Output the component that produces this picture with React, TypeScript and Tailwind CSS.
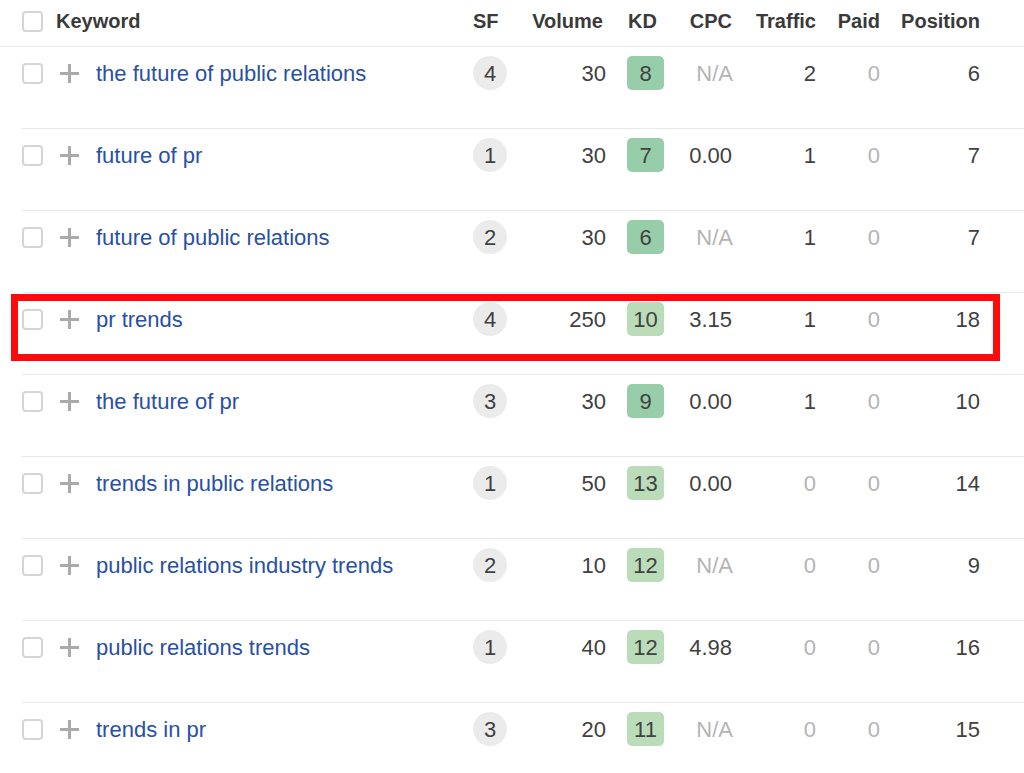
import React from 'react';

type Row = {
    keyword: string;
    sf: number;
    volume: number;
    kd: number;
    cpc: string;
    traffic: number;
    paid: number;
    position: number;
};

const rows: Row[] = [
    { keyword: 'the future of public relations', sf: 4, volume: 30, kd: 8, cpc: 'N/A', traffic: 2, paid: 0, position: 6 },
    { keyword: 'future of pr', sf: 1, volume: 30, kd: 7, cpc: '0.00', traffic: 1, paid: 0, position: 7 },
    { keyword: 'future of public relations', sf: 2, volume: 30, kd: 6, cpc: 'N/A', traffic: 1, paid: 0, position: 7 },
    { keyword: 'pr trends', sf: 4, volume: 250, kd: 10, cpc: '3.15', traffic: 1, paid: 0, position: 18 },
    { keyword: 'the future of pr', sf: 3, volume: 30, kd: 9, cpc: '0.00', traffic: 1, paid: 0, position: 10 },
    { keyword: 'trends in public relations', sf: 1, volume: 50, kd: 13, cpc: '0.00', traffic: 0, paid: 0, position: 14 },
    { keyword: 'public relations industry trends', sf: 2, volume: 10, kd: 12, cpc: 'N/A', traffic: 0, paid: 0, position: 9 },
    { keyword: 'public relations trends', sf: 1, volume: 40, kd: 12, cpc: '4.98', traffic: 0, paid: 0, position: 16 },
    { keyword: 'trends in pr', sf: 3, volume: 20, kd: 11, cpc: 'N/A', traffic: 0, paid: 0, position: 15 },
];

const columns =
    'grid grid-cols-[38px_36px_377px_34px_99px_59px_68px_83px_64px_100px]';

const Checkbox = () => (
    <span className="block size-[21px] rounded-[4px] border-2 border-[#d5d5d5] bg-white" />
);

const PlusIcon = () => (
    <svg width="19" height="19" viewBox="0 0 19 19" className="text-[#aaaaaa]">
        <path d="M9.5 0v19M0 9.5h19" stroke="currentColor" strokeWidth="3" fill="none" />
    </svg>
);

const Cell = ({ className = '', children }: { className?: string; children?: React.ReactNode }) => (
    <div className={`flex h-[35px] items-center justify-end ${className}`}>{children}</div>
);

const App: React.FC = () => {
    return (
        <div className="relative h-[773px] overflow-hidden bg-white font-['Liberation_Sans',Arial,sans-serif] text-[22px] text-[#414141]">
            <div className="border-b border-[#e8e8e8] pl-[22px]">
                <div className={`${columns} h-[42px] items-center text-[20px] font-bold text-[#3a3a3a]`}>
                    <Checkbox />
                    <div className="col-span-2 -ml-[4px]">Keyword</div>
                    <div>SF</div>
                    <div className="pr-[3px] text-right">Volume</div>
                    <div className="pl-[22px]">KD</div>
                    <div className="pr-[1px] text-right">CPC</div>
                    <div className="text-right">Traffic</div>
                    <div className="text-right">Paid</div>
                    <div className="text-right">Position</div>
                </div>
                <div className="h-[4px]" />
            </div>
            <div className="pl-[22px]">
                {rows.map((row) => (
                    <div
                        key={row.keyword}
                        className={`${columns} h-[82px] items-start border-b border-[#e8e8e8] pt-[9px]`}
                    >
                        <Cell className="!justify-start">
                            <Checkbox />
                        </Cell>
                        <Cell className="!justify-start">
                            <PlusIcon />
                        </Cell>
                        <Cell className="!justify-start text-[#2850a5]">{row.keyword}</Cell>
                        <Cell>
                            <span className="flex size-[34px] items-center justify-center self-start rounded-full bg-[#ebebeb]">
                                {row.sf}
                            </span>
                        </Cell>
                        <Cell>{row.volume}</Cell>
                        <Cell>
                            <span
                                className={`mr-[1px] flex h-[34px] w-[37px] items-center justify-center self-start rounded-[5px] ${
                                    row.kd < 10 ? 'bg-[#98cdaa]' : 'bg-[#badcb9]'
                                }`}
                            >
                                {row.kd}
                            </span>
                        </Cell>
                        <Cell className={row.cpc === 'N/A' ? 'text-[#b4b4b4]' : 'pr-[1px]'}>{row.cpc}</Cell>
                        <Cell className={row.traffic === 0 ? 'text-[#b4b4b4]' : ''}>{row.traffic}</Cell>
                        <Cell className="text-[#b4b4b4]">{row.paid}</Cell>
                        <Cell>{row.position}</Cell>
                    </div>
                ))}
            </div>
            <div className="pointer-events-none absolute left-[11px] top-[294px] h-[67px] w-[989px] border-[7px] border-[#fe0a0a]" />
        </div>
    );
};

export default App;
